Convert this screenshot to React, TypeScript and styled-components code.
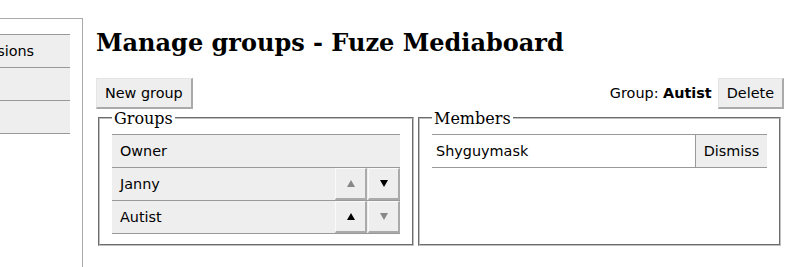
import React from 'react';
import styled, { createGlobalStyle } from 'styled-components';

interface IGroup {
    name: string;
    canUp: boolean;
    canDown: boolean;
    movable: boolean;
}

const groups: IGroup[] = [
    { name: 'Owner', canUp: false, canDown: false, movable: false },
    { name: 'Janny', canUp: false, canDown: true, movable: true },
    { name: 'Autist', canUp: true, canDown: false, movable: true },
];

const members = ['Shyguymask'];

const Triangle = ({ down }: { down?: boolean }): JSX.Element => (
    <svg width="8" height="7" viewBox="0 0 8 7">
        <polygon points={down ? '0,0 8,0 4,7' : '4,0 8,7 0,7'} fill="currentColor" />
    </svg>
);

const App = (): JSX.Element => {
    return (
        <>
            <GlobalStyle />
            <SPage>
                <SSidebar>
                    <SNavItem>Permissions</SNavItem>
                    <SNavItem>Users</SNavItem>
                    <SNavItem>Bans</SNavItem>
                </SSidebar>
                <SMain>
                    <STitle>Manage groups - Fuze Mediaboard</STitle>
                    <SToolbar>
                        <SButton type="button">New group</SButton>
                        <SCurrent>
                            <span>Group: <b>Autist</b></span>
                            <SButton type="button">Delete</SButton>
                        </SCurrent>
                    </SToolbar>
                    <SColumns>
                        <SFieldset>
                            <SLegend>Groups</SLegend>
                            <SList>
                                {groups.map((g) => (
                                    <SGroupRow key={g.name}>
                                        <SRowName>{g.name}</SRowName>
                                        {g.movable && (
                                            <>
                                                <SArrow type="button" disabled={!g.canUp}><Triangle /></SArrow>
                                                <SArrow type="button" disabled={!g.canDown}><Triangle down /></SArrow>
                                            </>
                                        )}
                                    </SGroupRow>
                                ))}
                            </SList>
                        </SFieldset>
                        <SFieldset>
                            <SLegend>Members</SLegend>
                            <SList>
                                {members.map((m) => (
                                    <SMemberRow key={m}>
                                        <SMemberName>{m}</SMemberName>
                                        <SDismiss type="button">Dismiss</SDismiss>
                                    </SMemberRow>
                                ))}
                            </SList>
                        </SFieldset>
                    </SColumns>
                </SMain>
            </SPage>
        </>
    );
};

const GlobalStyle = createGlobalStyle`
    body {
        margin: 0;
        background: #fff;
        color: #000;
        font-family: "DejaVu Serif", serif;
        overflow: hidden;
    }
`;

const SPage = styled.div`
    display: flex;
    min-height: 100vh;
`;

const SSidebar = styled.nav`
    flex: none;
    width: 142px;
    margin: 18px 0 0 -59px;
    padding: 15px 12px 0 0;
    border-top: 1px solid #aaa;
    border-right: 1px solid #aaa;
    box-sizing: border-box;
`;

const SNavItem = styled.div`
    height: 33px;
    display: flex;
    align-items: center;
    padding-left: 8px;
    background: #eee;
    border-top: 1px solid #999;
    font-family: "DejaVu Sans", sans-serif;
    font-size: 14.4px;
    box-sizing: border-box;
    &:last-child {
        border-bottom: 1px solid #999;
        height: 34px;
    }
`;

const SMain = styled.main`
    flex: 1;
    padding: 0 14px 0 13px;
`;

const STitle = styled.h1`
    font-family: "DejaVu Serif", serif;
    font-size: 24px;
    font-weight: bold;
    margin: 29px 0 21px;
    line-height: 1.15;
`;

const SToolbar = styled.div`
    display: flex;
    justify-content: space-between;
    align-items: center;
`;

const SCurrent = styled.div`
    display: flex;
    align-items: center;
    gap: 6px;
    margin-right: -1px;
    font-family: "DejaVu Sans", sans-serif;
    font-size: 14.4px;
`;

const SButton = styled.button`
    font-family: "DejaVu Sans", sans-serif;
    font-size: 14.4px;
    height: 31px;
    padding: 0 8px;
    background: #eee;
    color: #000;
    border: 1px solid #e4e4e4;
    border-right: 2px solid #aaa;
    border-bottom: 2px solid #aaa;
    border-radius: 0;
`;

const SColumns = styled.div`
    display: grid;
    grid-template-columns: 320px 1fr;
`;

const SFieldset = styled.fieldset`
    margin: 0 2px;
    padding: 6px 12px 10px;
    border: 2px groove #c0c0c0;
    min-width: 0;
`;

const SLegend = styled.legend`
    font-family: "DejaVu Serif", serif;
    font-size: 16px;
    padding: 0 2px;
`;

const SList = styled.div`
    border-bottom: 1px solid #999;
`;

const SGroupRow = styled.div`
    display: flex;
    align-items: stretch;
    height: 33px;
    background: #eee;
    border-top: 1px solid #999;
    box-sizing: border-box;
    font-family: "DejaVu Sans", sans-serif;
    font-size: 14.4px;
`;

const SRowName = styled.span`
    flex: 1;
    display: flex;
    align-items: center;
    padding-left: 8px;
`;

const SArrow = styled.button`
    width: 32px;
    margin-left: 1px;
    padding: 0;
    display: flex;
    align-items: center;
    justify-content: center;
    background: #eee;
    border: 1px solid #fafafa;
    border-right: 2px solid #aaa;
    border-bottom: 2px solid #aaa;
    border-radius: 0;
    color: #000;
    &:disabled {
        color: #888;
    }
`;

const SMemberRow = styled.div`
    display: flex;
    align-items: stretch;
    height: 33px;
    border-top: 1px solid #999;
    box-sizing: border-box;
    font-family: "DejaVu Sans", sans-serif;
    font-size: 14.4px;
`;

const SMemberName = styled.span`
    flex: 1;
    display: flex;
    align-items: center;
    padding-left: 4px;
`;

const SDismiss = styled.button`
    width: 72px;
    padding: 0;
    font-family: "DejaVu Sans", sans-serif;
    font-size: 14.4px;
    background: #eee;
    color: #000;
    border: none;
    border-left: 1px solid #999;
    border-radius: 0;
`;

export default App;
